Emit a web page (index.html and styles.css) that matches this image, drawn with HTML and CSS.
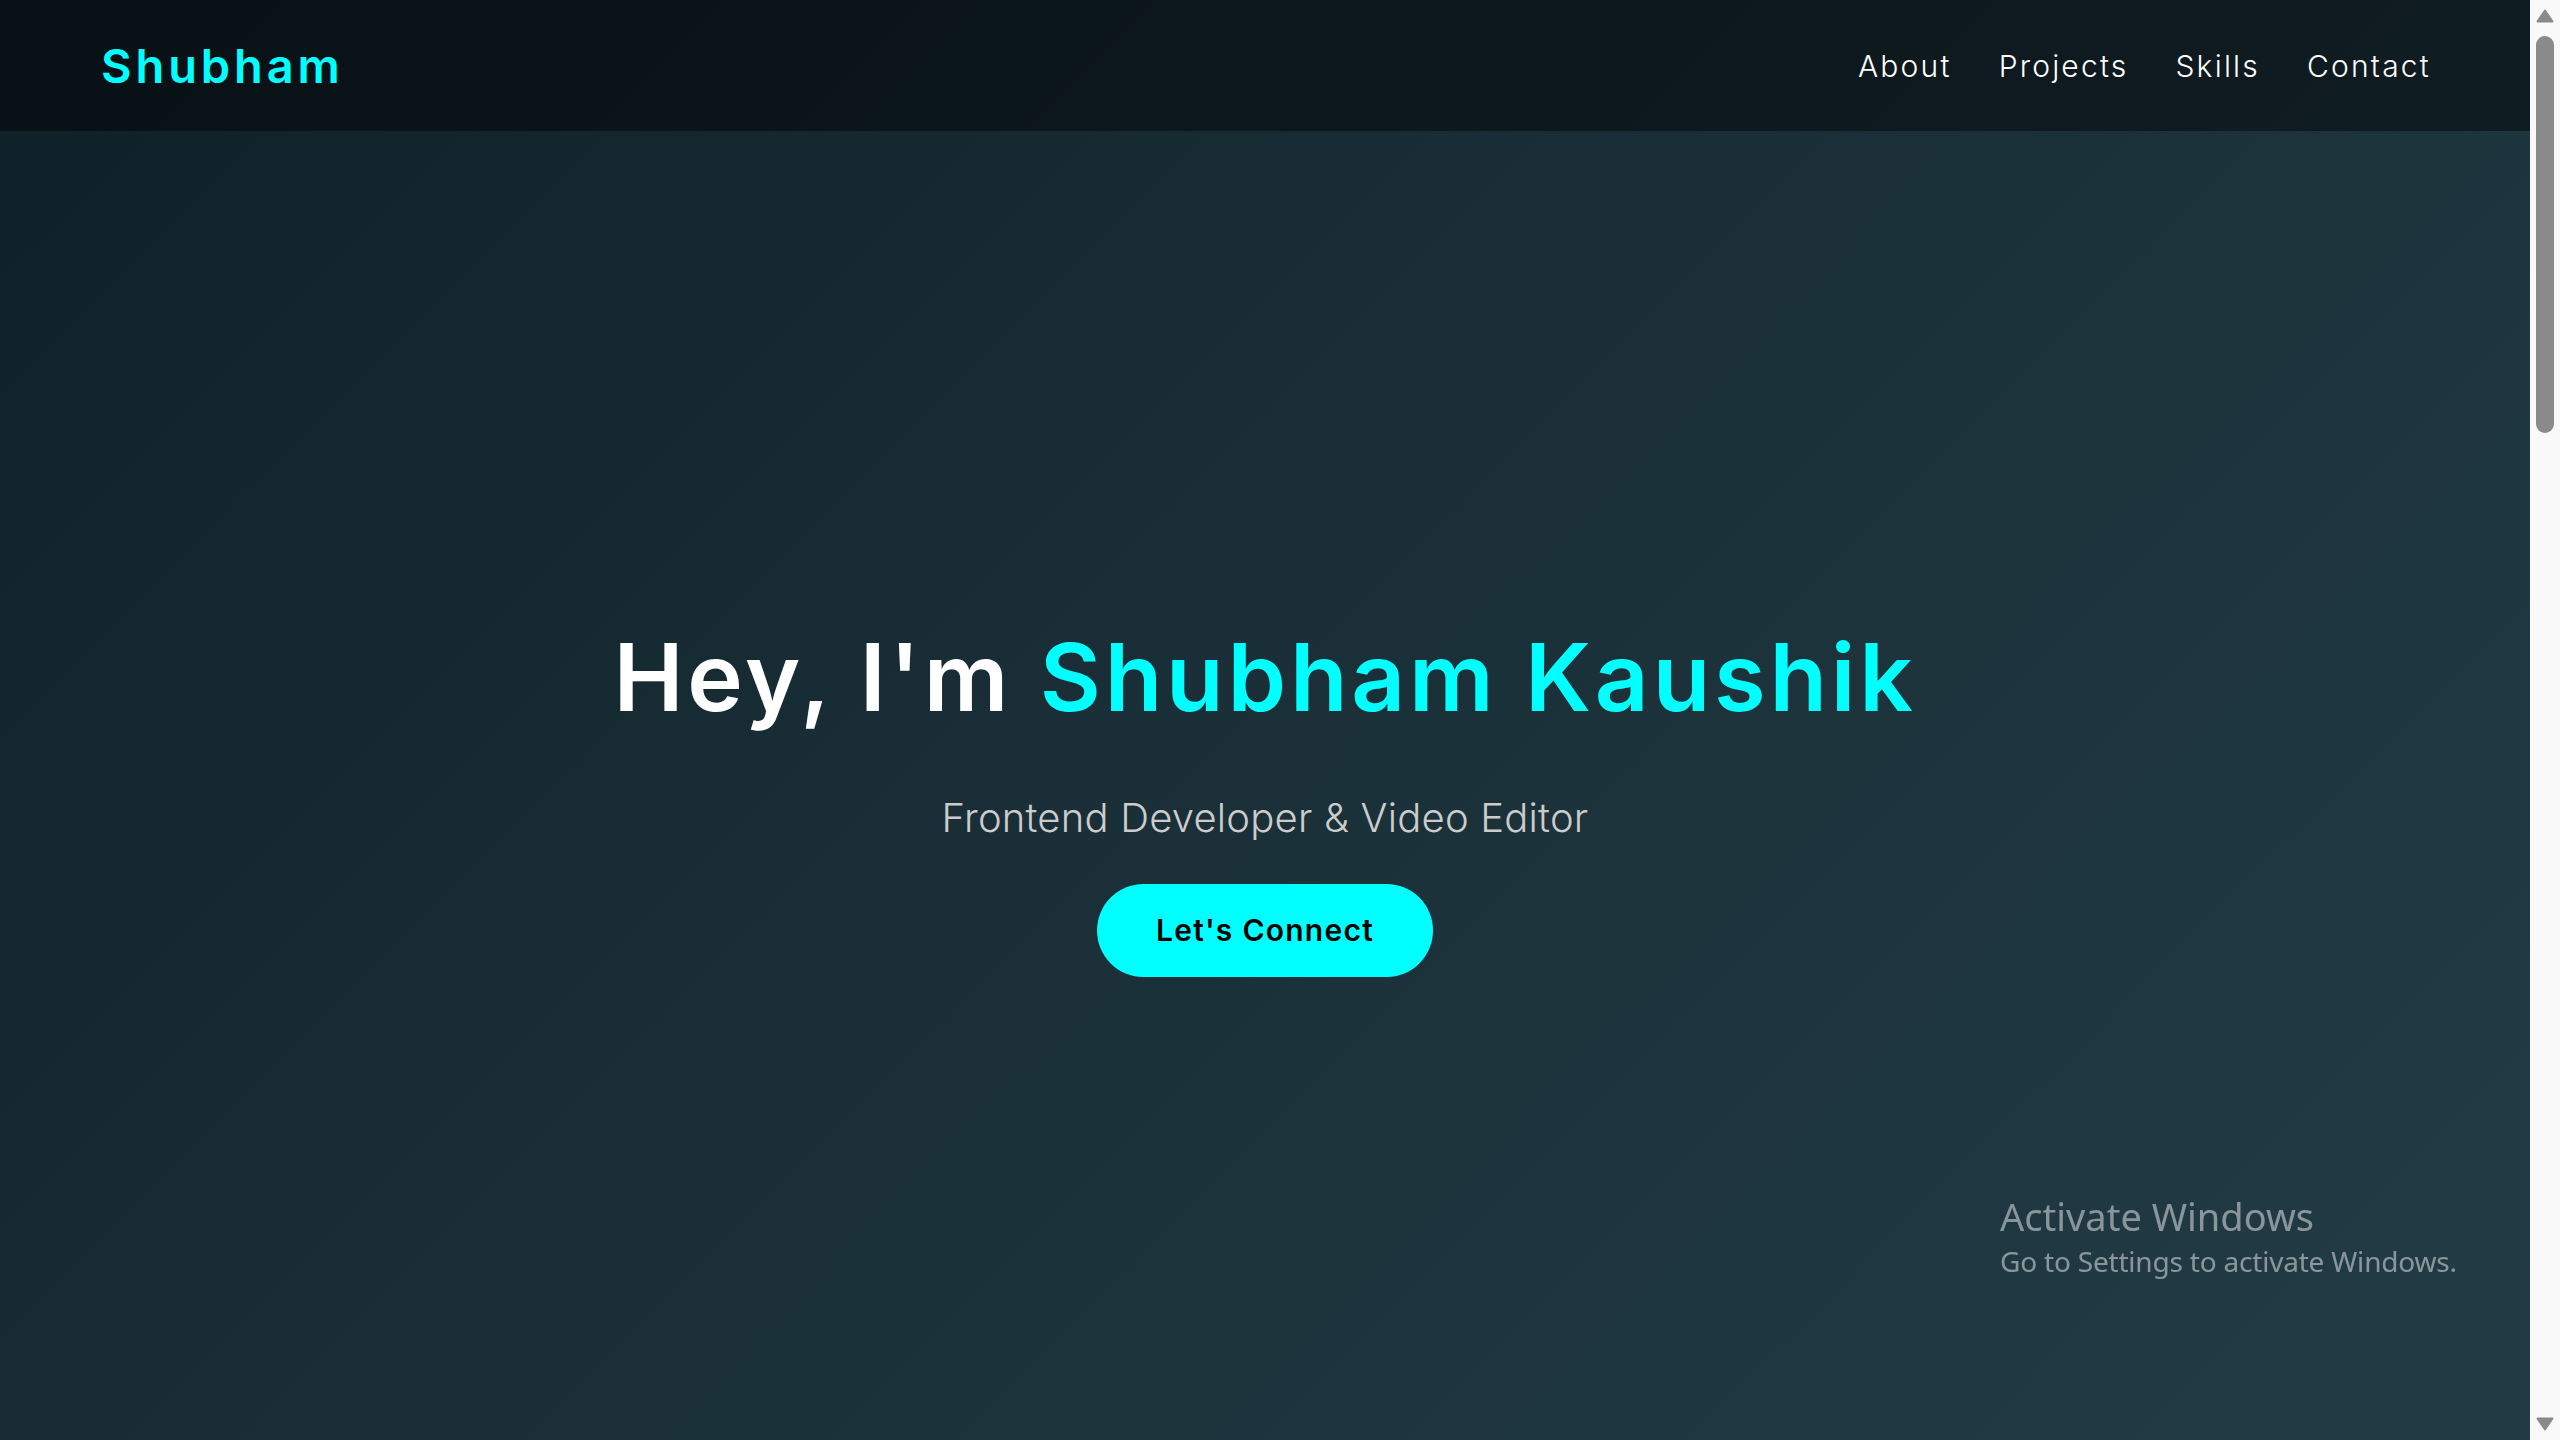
FILE: index.html
```html
<!DOCTYPE html>
<html lang="en">
<head>
  <meta charset="UTF-8">
  <title>Shubham Kaushik | Portfolio</title>
  <link rel="stylesheet" href="styles.css">
</head>
<body>
  <div class="window">
    <div class="page">
      <header class="navbar">
        <a href="#" class="logo">Shubham</a>
        <nav class="nav-links">
          <a href="#about">About</a>
          <a href="#projects">Projects</a>
          <a href="#skills">Skills</a>
          <a href="#contact">Contact</a>
        </nav>
      </header>

      <section class="hero" id="home">
        <h1>Hey, I'm <span class="highlight">Shubham Kaushik</span></h1>
        <p class="tagline">Frontend Developer &amp; Video Editor</p>
        <a href="#contact" class="btn">Let's Connect</a>
      </section>
    </div>

    <div class="scrollbar">
      <svg class="arrow" viewBox="0 0 18 14"><polygon points="9,1.5 16.5,12.5 1.5,12.5" /></svg>
      <span class="thumb"></span>
      <span class="track"></span>
      <svg class="arrow" viewBox="0 0 18 14"><polygon points="1.5,1.5 16.5,1.5 9,12.5" /></svg>
    </div>
  </div>

  <div class="activate">
    <div class="activate-title">Activate Windows</div>
    <div class="activate-sub">Go to Settings to activate Windows.</div>
  </div>
</body>
</html>
```

FILE: styles.css
```css
* {
  margin: 0;
  padding: 0;
  box-sizing: border-box;
}

html, body {
  height: 100%;
  overflow: hidden;
}

body {
  font-family: "Inter", "Noto Sans", sans-serif;
  background-color: #0f2027;
  color: #ffffff;
}

.window {
  display: flex;
  height: 100vh;
}

.page {
  flex: 1;
  display: flex;
  flex-direction: column;
  background: linear-gradient(135deg, #0f2027 0%, #1b313a 55%, #223c46 100%);
}

/* top bar */
.navbar {
  height: 131px;
  display: flex;
  align-items: center;
  justify-content: space-between;
  padding: 0 99px 0 101px;
  background-color: rgba(0, 0, 0, 0.45);
}

.logo {
  font-size: 47px;
  font-weight: 600;
  letter-spacing: 3.9px;
  color: #00ffff;
  text-decoration: none;
}

.nav-links {
  display: flex;
  gap: 47px;
}

.nav-links a {
  color: #ffffff;
  text-decoration: none;
  font-size: 30px;
  font-weight: 300;
  letter-spacing: 2.2px;
}

/* hero */
.hero {
  flex: 1;
  display: flex;
  flex-direction: column;
  align-items: center;
  justify-content: center;
  padding-top: 27px;
  text-align: center;
}

.hero h1 {
  font-size: 94px;
  font-weight: 600;
  line-height: 112px;
  letter-spacing: 3.8px;
}

.highlight {
  color: #00ffff;
}

.tagline {
  margin-top: 57px;
  font-size: 40px;
  font-weight: 300;
  line-height: 56px;
  letter-spacing: 0.2px;
  color: #cccccc;
}

.btn {
  margin-top: 38px;
  padding: 28px 59px;
  border-radius: 50px;
  background-color: #00ffff;
  color: #000000;
  font-size: 30px;
  font-weight: 600;
  line-height: 37px;
  letter-spacing: 1.25px;
  text-decoration: none;
}

/* scrollbar column */
.scrollbar {
  width: 30px;
  display: flex;
  flex-direction: column;
  align-items: center;
  background-color: #f9f9f9;
  padding: 9px 0;
}

.arrow {
  width: 18px;
  height: 14px;
  fill: #8a8a8a;
  stroke: #8a8a8a;
  stroke-width: 2;
  stroke-linejoin: round;
}

.thumb {
  width: 18px;
  height: 397px;
  margin-top: 13px;
  border-radius: 9px;
  background-color: #8a8a8a;
}

.track {
  flex: 1;
}

/* system watermark */
.activate {
  position: fixed;
  left: 2000px;
  top: 1193px;
  font-family: "Noto Sans", "Open Sans", sans-serif;
  color: rgba(255, 255, 255, 0.47);
}

.activate-title {
  font-size: 38px;
  line-height: 46px;
}

.activate-sub {
  margin-top: 2px;
  font-size: 28px;
  line-height: 40px;
  letter-spacing: -0.2px;
}
```
